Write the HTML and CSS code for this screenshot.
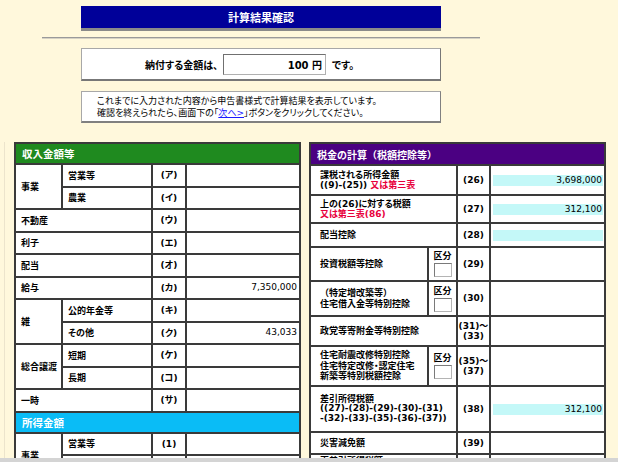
FILE: index.html
```html
<!DOCTYPE html>
<html lang="ja">
<head>
<meta charset="utf-8">
<title>計算結果確認</title>
<link rel="stylesheet" href="styles.css">
</head>
<body>
<div class="page">
  <div class="top">
    <div class="title">計算結果確認</div>
    <div class="rule"></div>
    <div class="pay">
      <span>納付する金額は、</span>
      <span class="amount-box">100 円</span>
      <span>です。</span>
    </div>
    <div class="info">
      これまでに入力された内容から申告書様式で計算結果を表示しています。<br>
      確認を終えられたら、画面下の「<a href="#">次へ&gt;</a>」ボタンをクリックしてください。
    </div>
  </div>

  <div class="lower">
    <div class="panel panel-l">
      <table class="tbl tbl-l">
        <colgroup><col class="l1"><col class="l2"><col class="l3"><col class="l4"></colgroup>
        <tr><th colspan="4" class="hd hd-green">収入金額等</th></tr>
        <tr><td rowspan="2" class="lbl">事業</td><td class="lbl">営業等</td><td class="code">(ア)</td><td class="v"><div class="amt"></div></td></tr>
        <tr><td class="lbl">農業</td><td class="code">(イ)</td><td class="v"><div class="amt"></div></td></tr>
        <tr><td colspan="2" class="lbl">不動産</td><td class="code">(ウ)</td><td class="v"><div class="amt"></div></td></tr>
        <tr><td colspan="2" class="lbl">利子</td><td class="code">(エ)</td><td class="v"><div class="amt"></div></td></tr>
        <tr><td colspan="2" class="lbl">配当</td><td class="code">(オ)</td><td class="v"><div class="amt"></div></td></tr>
        <tr><td colspan="2" class="lbl">給与</td><td class="code">(カ)</td><td class="v"><div class="amt">7,350,000</div></td></tr>
        <tr><td rowspan="2" class="lbl">雑</td><td class="lbl">公的年金等</td><td class="code">(キ)</td><td class="v"><div class="amt"></div></td></tr>
        <tr><td class="lbl">その他</td><td class="code">(ク)</td><td class="v"><div class="amt">43,033</div></td></tr>
        <tr><td rowspan="2" class="lbl">総合譲渡</td><td class="lbl">短期</td><td class="code">(ケ)</td><td class="v"><div class="amt"></div></td></tr>
        <tr><td class="lbl">長期</td><td class="code">(コ)</td><td class="v"><div class="amt"></div></td></tr>
        <tr><td colspan="2" class="lbl">一時</td><td class="code">(サ)</td><td class="v"><div class="amt"></div></td></tr>
        <tr><th colspan="4" class="hd hd-sky">所得金額</th></tr>
        <tr><td rowspan="2" class="lbl">事業</td><td class="lbl">営業等</td><td class="code">(1)</td><td class="v"><div class="amt"></div></td></tr>
        <tr><td class="lbl">農業</td><td class="code">(2)</td><td class="v"><div class="amt"></div></td></tr>
      </table>
    </div>

    <div class="panel panel-r">
      <table class="tbl tbl-r">
        <colgroup><col class="r1"><col class="r2"><col class="r3"><col class="r4"></colgroup>
        <tr><th colspan="4" class="hd hd-purple">税金の計算（税額控除等）</th></tr>
        <tr class="h30"><td colspan="2" class="lbl">課税される所得金額<br>((9)-(25)) <span class="red">又は第三表</span></td><td class="code">(26)</td><td class="v"><div class="amt cyan">3,698,000</div></td></tr>
        <tr class="h28"><td colspan="2" class="lbl">上の(26)に対する税額<br><span class="red">又は第三表(86)</span></td><td class="code">(27)</td><td class="v"><div class="amt cyan">312,100</div></td></tr>
        <tr class="h24"><td colspan="2" class="lbl">配当控除</td><td class="code">(28)</td><td class="v"><div class="amt cyan"></div></td></tr>
        <tr class="h34"><td class="lbl">投資税額等控除</td><td class="kubun"><div>区分</div><span class="box"></span></td><td class="code">(29)</td><td class="v"><div class="amt"></div></td></tr>
        <tr class="h35"><td class="lbl"><span class="full">（特定増改築等）</span><br>住宅借入金等特別控除</td><td class="kubun"><div>区分</div><span class="box"></span></td><td class="code">(30)</td><td class="v"><div class="amt"></div></td></tr>
        <tr class="h30"><td colspan="2" class="lbl">政党等寄附金等特別控除</td><td class="code">(31)～<br>(33)</td><td class="v"><div class="amt"></div></td></tr>
        <tr class="h40"><td class="lbl">住宅耐震改修特別控除<br>住宅特定改修・認定住宅<br>新築等特別税額控除</td><td class="kubun"><div>区分</div><span class="box"></span></td><td class="code">(35)～<br>(37)</td><td class="v"><div class="amt"></div></td></tr>
        <tr class="h46"><td colspan="2" class="lbl tight">差引所得税額<br>((27)-(28)-(29)-(30)-(31)<br>-(32)-(33)-(35)-(36)-(37))</td><td class="code">(38)</td><td class="v"><div class="amt cyan">312,100</div></td></tr>
        <tr class="h22"><td colspan="2" class="lbl">災害減免額</td><td class="code">(39)</td><td class="v"><div class="amt"></div></td></tr>
        <tr class="h24"><td colspan="2" class="lbl top">再差引所得税額<br>(基準所得税額)((38)-(39))</td><td class="code">(40)</td><td class="v"><div class="amt cyan"></div></td></tr>
      </table>
    </div>
  </div>
</div>
</body>
</html>
```

FILE: styles.css
```css
html, body {
  margin: 0;
  padding: 0;
}

body {
  background: #fff8dc;
  color: #000;
  font-family: "DejaVu Sans", "Noto Sans CJK JP", sans-serif;
  font-size: 9px;
  font-feature-settings: "palt" 1;
}

.page {
  height: 462px;
  display: flex;
  flex-direction: column;
  overflow: hidden;
}

.top {
  width: 522px;
  flex: none;
}

.title {
  width: 360px;
  height: 22px;
  margin: 6px auto 0;
  background: #000099;
  border-bottom: 3px solid #8a8a8a;
  color: #fff;
  font-weight: bold;
  font-size: 11px;
  display: flex;
  align-items: center;
  justify-content: center;
}

.rule {
  width: 438px;
  height: 0;
  margin: 6px auto 0;
  border-top: 1px solid #9a9a9a;
  border-bottom: 1px solid #d6d2c4;
}

.pay {
  box-sizing: border-box;
  width: 360px;
  height: 33px;
  margin: 9px auto 0;
  background: #fff;
  border: 1px solid #a8a8a8;
  border-right-color: #777;
  border-bottom: 2px solid #777;
  display: flex;
  align-items: center;
  padding-left: 63px;
  font-weight: bold;
  font-size: 10px;
}

.amount-box {
  box-sizing: border-box;
  width: 103px;
  height: 21px;
  margin: 0 6px 0 5px;
  border: 1px solid #b0b0b0;
  border-top-color: #707070;
  border-left-color: #707070;
  display: flex;
  align-items: center;
  justify-content: flex-end;
  padding-right: 3px;
}

.info {
  box-sizing: border-box;
  width: 360px;
  height: 32px;
  margin: 10px auto 0;
  background: #fff;
  border: 1px solid #a8a8a8;
  border-right-color: #808080;
  border-bottom: 2px solid #808080;
  padding: 4px 0 0 15px;
  line-height: 11.5px;
}

.info a {
  color: #1a1aff;
  text-decoration: underline;
}

.lower {
  flex: 1;
  min-height: 0;
  display: flex;
  overflow: hidden;
  padding-top: 19px;
  border-bottom: 4px solid #d4d4d4;
}

.panel {
  box-sizing: border-box;
}

.panel-l {
  width: 296px;
  margin-left: 4px;
  padding-left: 9px;
  border-left: 1px solid #ece4cc;
  border-right: 1px solid #d8d4c6;
}

.panel-r {
  width: 318px;
  padding-left: 9px;
}

.tbl {
  border-collapse: collapse;
  table-layout: fixed;
  background: #fff;
}

.tbl td,
.tbl th {
  border: 2px solid #3a3a3a;
  padding: 0;
  font-weight: bold;
  vertical-align: middle;
}

.tbl-l {
  width: 285px;
}

.l1 { width: 47px; }
.l2 { width: 90px; }
.l3 { width: 34px; }
.l4 { width: 114px; }

.tbl-r {
  width: 295px;
}

.r1 { width: 118px; }
.r2 { width: 29px; }
.r3 { width: 33px; }
.r4 { width: 115px; }

.tbl th.hd {
  height: 19px;
  color: #fff;
  text-align: left;
  font-size: 10.5px;
  padding-left: 6px;
}

.hd-green { background: #1f8a1f; }
.hd-sky { background: #0abcf6; }

.tbl th.hd-purple {
  background: #4b0082;
  height: 20px;
  font-size: 10px;
  font-feature-settings: normal;
}

.full {
  font-feature-settings: normal;
}

.tbl-l td {
  height: 20.5px;
}

.tbl-l .lbl {
  padding-left: 5px;
}

.tbl-r .lbl {
  padding-left: 9px;
  line-height: 10.5px;
}

.tbl-r .lbl.tight {
  line-height: 9.5px;
}

.tbl-r .lbl.top {
  vertical-align: top;
  padding-top: 1px;
}

.code {
  text-align: center;
  line-height: 10.5px;
}

.tbl .v {
  padding: 0 1px 0 2px;
}

.amt {
  height: 11px;
  line-height: 11px;
  text-align: right;
  font-weight: normal;
  font-size: 9px;
  padding-right: 1px;
}

.cyan {
  background: #c4f8f8;
}

.red {
  color: #e8003c;
}

.kubun {
  text-align: center;
  line-height: 10px;
}

.box {
  display: block;
  width: 18px;
  height: 14px;
  box-sizing: border-box;
  margin: 2px auto 0;
  background: #fff;
  border: 1px solid #b4b4b4;
  border-top-color: #7a7a7a;
  border-left-color: #7a7a7a;
}

.tbl .h22 td { height: 20px; }
.tbl .h24 td { height: 22px; }
.tbl .h28 td { height: 26px; }
.tbl .h30 td { height: 28px; }
.tbl .h34 td { height: 32px; }
.tbl .h35 td { height: 33px; }
.tbl .h40 td { height: 38px; }
.tbl .h46 td { height: 44px; }
```
